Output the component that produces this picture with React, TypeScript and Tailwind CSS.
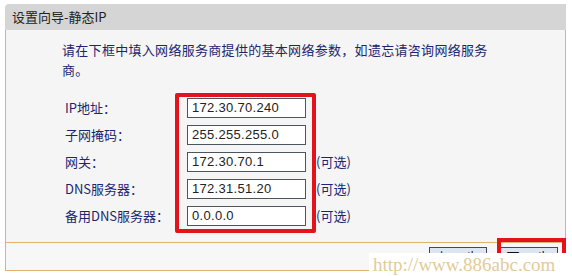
import React from 'react';

const FIELDS = [
  { label: 'IP地址：', value: '172.30.70.240', optional: false },
  { label: '子网掩码：', value: '255.255.255.0', optional: false },
  { label: '网关：', value: '172.30.70.1', optional: true },
  { label: 'DNS服务器：', value: '172.31.51.20', optional: true },
  { label: '备用DNS服务器：', value: '0.0.0.0', optional: true },
];

const cjk = "font-['Noto_Sans_CJK_SC',sans-serif]";

export default function App() {
  return (
    <div className={`relative w-[572px] h-[276px] overflow-hidden bg-white pt-[4px] pl-[5px] pr-[6px] ${cjk}`}>
      {/* title bar */}
      <div className="h-[26px] bg-[#d5d5d5] rounded-tl-[4px] flex items-center pl-[7px] text-[13px] text-[#222]">
        设置向导-静态IP
      </div>

      {/* body */}
      <div className="relative h-[212px] border-x border-[#dfb273] bg-[#f5f5f5]">
        <p className="pt-[10px] pl-[56px] text-[13px] leading-[20px] tracking-[0.3px] text-[#1c2570]">
          请在下框中填入网络服务商提供的基本网络参数，如遗忘请咨询网络服务
          <br />
          商。
        </p>

        <div className="mt-[18px] ml-[59px] grid grid-cols-[122px_119px_auto] gap-y-[7px] items-center">
          {FIELDS.map((f) => (
            <React.Fragment key={f.label}>
              <span className="text-[13px] leading-[20px] text-[#1c2570]">{f.label}</span>
              <div className="h-[20px] border border-[#4a5560] bg-white pl-[4px] flex items-center font-['Liberation_Sans',sans-serif] text-[13px] tracking-[0.3px] text-[#222]">
                {f.value}
              </div>
              <span className="pl-[10px] text-[13px] leading-[20px] text-[#1c2570]">
                {f.optional ? '(可选)' : ''}
              </span>
            </React.Fragment>
          ))}
        </div>

        {/* red annotation around the inputs */}
        <div className="absolute left-[169px] top-[63px] w-[141px] h-[140px] border-4 border-[#e0141a] rounded-[2px]"></div>
      </div>

      {/* footer */}
      <div className="h-[29px] border border-[#dfb273] bg-[#f7f7f7] flex justify-end items-start gap-[13px] pt-[4px] pr-[7px]">
        <button className="w-[58px] h-[22px] border border-[#3c4a66] bg-[#dde6f0] text-[13px] leading-[18px] tracking-[2px] text-[#111] flex justify-center">上一步</button>
        <button className="w-[58px] h-[22px] border border-[#3c4a66] bg-[#dde6f0] text-[13px] leading-[18px] tracking-[2px] text-[#111] flex justify-center">下一步</button>
      </div>

      {/* red annotation around next button */}
      <div className="absolute left-[497px] top-[238px] w-[69px] h-[44px] border-4 border-[#e0141a]"></div>

      {/* watermark */}
      <div className="absolute left-[369px] top-[253px] w-[203px] h-[23px] bg-white pl-[4px] font-['Liberation_Serif',serif] text-[19px] leading-[23px] text-[#e3cb98]">
        http://www.886abc.com
      </div>
    </div>
  );
}
